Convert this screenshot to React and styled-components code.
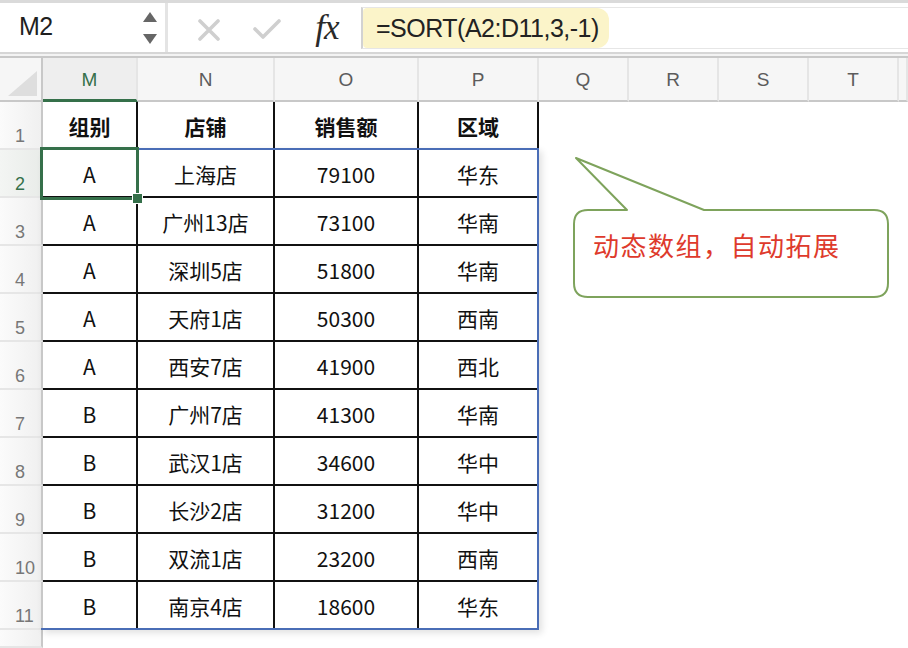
import React from "react";
import styled, { createGlobalStyle } from "styled-components";

const Global = createGlobalStyle`
  html, body { margin: 0; padding: 0; background: #fff; overflow: hidden; }
  body { font-family: "Liberation Sans", "Noto Sans CJK SC", sans-serif; }
`;

const Page = styled.div`
  position: relative;
  width: 908px;
  height: 648px;
  display: flex;
  flex-direction: column;
  overflow: hidden;
`;

const Toolbar = styled.div`
  flex-shrink: 0;
  height: 49px;
  border-top: 3px solid #dadada;
  border-bottom: 2px solid #d6d6d6;
  display: flex;
  background: #fff;
`;

const NameBox = styled.div`
  width: 168px;
  border-right: 3px solid #e4e4e4;
  display: flex;
  align-items: center;
  justify-content: space-between;
  padding: 0 8px 0 19px;
  box-sizing: border-box;
`;

const NameText = styled.span`
  font-size: 25px;
  letter-spacing: -0.5px;
  color: #1f1f1f;
  margin-top: -2px;
`;

const Spinner = styled.div`
  display: flex;
  flex-direction: column;
  gap: 12px;
`;

const FormulaArea = styled.div`
  flex: 1;
  display: flex;
  align-items: center;
`;

const IconSlot = styled.div`
  width: ${(p) => p.$w}px;
  flex-shrink: 0;
  display: flex;
  justify-content: center;
  align-items: center;
  padding-left: ${(p) => p.$pl || 0}px;
  box-sizing: border-box;
`;

const Fx = styled.span`
  font-family: "Liberation Serif", serif;
  font-style: italic;
  font-size: 35px;
  color: #2a2a2a;
  margin-top: 0;
  letter-spacing: -1px;
`;

const FormulaInput = styled.div`
  flex: 1;
  align-self: stretch;
  margin: 4px 0 3px 3px;
  border-top: 1px solid #e6e6e6;
  border-bottom: 1px solid #e6e6e6;
  border-left: 2px solid #d2d2d2;
  display: flex;
  align-items: stretch;
`;

const FormulaChip = styled.div`
  background: #fbf4c9;
  border-radius: 4px 12px 12px 4px;
  padding: 0 10px 0 13px;
  display: flex;
  align-items: center;
  font-size: 25px;
  letter-spacing: -0.5px;
  color: #222;
`;

const Gap = styled.div`
  flex-shrink: 0;
  height: 2px;
  background: #f3f3f3;
`;

const Sheet = styled.div`
  flex: 1;
  min-height: 0;
  display: grid;
  grid-template-columns: 43px 95px 137px 144px 120px 90px 90px 90px 90px 1fr;
  grid-template-rows: 44px repeat(11, 48px) 1fr;
  border-top: 2px solid #c8c8c8;
  position: relative;
`;

const place = (p) => `grid-row: ${p.$r}; grid-column: ${p.$c};`;

const Corner = styled.div`
  ${place}
  background: #f6f6f6;
  border-bottom: 2px solid #c8c8c8;
  border-right: 2px solid #c8c8c8;
  position: relative;
  &::after {
    content: "";
    position: absolute;
    right: 4px;
    bottom: 4px;
    width: 29px;
    height: 25px;
    background: #dedede;
    clip-path: polygon(100% 0, 100% 100%, 0 100%);
  }
`;

const ColHead = styled.div`
  ${place}
  background: ${(p) => (p.$active ? "#eeeeee" : "#f6f6f6")};
  border-right: 2px solid #e5e5e5;
  border-bottom: ${(p) => (p.$active ? "3px solid #35704a" : "2px solid #c8c8c8")};
  margin-left: ${(p) => (p.$active ? "-2px" : "0")};
  border-left: ${(p) => (p.$active ? "2px solid #35704a" : "none")};
  display: flex;
  align-items: center;
  justify-content: center;
  font-size: 19px;
  color: ${(p) => (p.$active ? "#35704a" : "#5c5c5c")};
  padding-top: 2px;
  box-sizing: border-box;
`;

const RowHead = styled.div`
  ${place}
  background: ${(p) =>
    p.$active
      ? "linear-gradient(to right, #f3f5f3, #e9ece9)"
      : "linear-gradient(to right, #fbfbfb, #f0f0f0)"};
  border-right: 2px solid #c8c8c8;
  border-bottom: 2px solid #e6e6e6;
  display: flex;
  align-items: flex-end;
  padding: 0 0 1px 15px;
  font-size: 18px;
  color: ${(p) => (p.$active ? "#35704a" : "#777")};
  box-sizing: border-box;
`;

const Cell = styled.div`
  ${place}
  border-right: 2px solid #111;
  border-bottom: 2px solid #111;
  display: flex;
  align-items: center;
  justify-content: center;
  font-family: "Noto Sans CJK SC", "Liberation Sans", sans-serif;
  font-size: 21px;
  font-weight: ${(p) => (p.$head ? 700 : 400)};
  color: #111;
  padding-top: 1px;
  box-sizing: border-box;
`;

const SpillRange = styled.div`
  grid-column: 2 / 6;
  grid-row: 3 / 13;
  margin: -2px 0 0 -2px;
  border-top: 2px solid #4a6db6;
  border-right: 2px solid #4a6db6;
  border-bottom: 2px solid #4a6db6;
  box-shadow: 3px 3px 7px rgba(0, 0, 0, 0.12);
  pointer-events: none;
  z-index: 1;
`;

const Selection = styled.div`
  grid-column: 2;
  grid-row: 3;
  margin: -3px -1px -2px -3px;
  border: 3px solid #35704a;
  position: relative;
  pointer-events: none;
  z-index: 2;
`;

const FillHandle = styled.span`
  position: absolute;
  right: -7px;
  bottom: -7px;
  width: 9px;
  height: 9px;
  background: #35704a;
  border: 1px solid #fff;
`;

const Callout = styled.div`
  position: absolute;
  left: 573px;
  top: 156px;
  width: 318px;
  height: 144px;
  z-index: 3;
`;

const CalloutShape = styled.svg`
  display: block;
`;

const CalloutText = styled.div`
  position: absolute;
  left: 20px;
  top: 74px;
  font-family: "Noto Sans CJK SC", sans-serif;
  font-size: 26px;
  line-height: 30px;
  letter-spacing: 1.5px;
  color: #de3a2c;
  white-space: nowrap;
`;

const cols = ["M", "N", "O", "P", "Q", "R", "S", "T"];
const header = ["组别", "店铺", "销售额", "区域"];
const rows = [
  ["A", "上海店", "79100", "华东"],
  ["A", "广州13店", "73100", "华南"],
  ["A", "深圳5店", "51800", "华南"],
  ["A", "天府1店", "50300", "西南"],
  ["A", "西安7店", "41900", "西北"],
  ["B", "广州7店", "41300", "华南"],
  ["B", "武汉1店", "34600", "华中"],
  ["B", "长沙2店", "31200", "华中"],
  ["B", "双流1店", "23200", "西南"],
  ["B", "南京4店", "18600", "华东"],
];

export default function App() {
  const data = [header, ...rows];
  return (
    <>
      <Global />
      <Page>
        <Toolbar>
          <NameBox>
            <NameText>M2</NameText>
            <Spinner>
              <svg width="14" height="10" viewBox="0 0 14 10">
                <path d="M7 0 L14 10 L0 10 Z" fill="#666" />
              </svg>
              <svg width="14" height="10" viewBox="0 0 14 10">
                <path d="M0 0 L14 0 L7 10 Z" fill="#666" />
              </svg>
            </Spinner>
          </NameBox>
          <FormulaArea>
            <IconSlot $w={82}>
              <svg width="22" height="22" viewBox="0 0 22 22" style={{ marginTop: 4 }}>
                <path d="M2 2 L20 20 M20 2 L2 20" stroke="#cfcfcf" strokeWidth="3.6" strokeLinecap="round" />
              </svg>
            </IconSlot>
            <IconSlot $w={34}>
              <svg width="28" height="22" viewBox="0 0 28 22" style={{ marginTop: 2 }}>
                <path d="M2 11 L10 19 L26 3" stroke="#cfcfcf" strokeWidth="3.6" fill="none" strokeLinecap="round" strokeLinejoin="round" />
              </svg>
            </IconSlot>
            <IconSlot $w={74} $pl={12}>
              <Fx>fx</Fx>
            </IconSlot>
            <FormulaInput>
              <FormulaChip>=SORT(A2:D11,3,-1)</FormulaChip>
            </FormulaInput>
          </FormulaArea>
        </Toolbar>
        <Gap />
        <Sheet>
          <Corner $r={1} $c={1} />
          {cols.map((c, j) => (
            <ColHead key={c} $r={1} $c={j + 2} $active={c === "M"}>
              {c}
            </ColHead>
          ))}
          <ColHead $r={1} $c={10} />
          {data.map((r, i) => (
            <React.Fragment key={i}>
              <RowHead $r={i + 2} $c={1} $active={i === 1}>
                {i + 1}
              </RowHead>
              {r.map((v, j) => (
                <Cell key={j} $r={i + 2} $c={j + 2} $head={i === 0}>
                  {v}
                </Cell>
              ))}
            </React.Fragment>
          ))}
          <RowHead $r={13} $c={1} />
          <SpillRange />
          <Selection>
            <FillHandle />
          </Selection>
        </Sheet>
        <Callout>
          <CalloutShape width="318" height="144" viewBox="0 0 318 144">
            <path
              d="M15 54 L54 54 L3 2 L131 54 L301 54 Q315 54 315 68 L315 127 Q315 141 301 141 L15 141 Q1 141 1 127 L1 68 Q1 54 15 54 Z"
              fill="#fff"
              stroke="#7ea35c"
              strokeWidth="2"
              strokeLinejoin="round"
            />
          </CalloutShape>
          <CalloutText>动态数组，自动拓展</CalloutText>
        </Callout>
      </Page>
    </>
  );
}
